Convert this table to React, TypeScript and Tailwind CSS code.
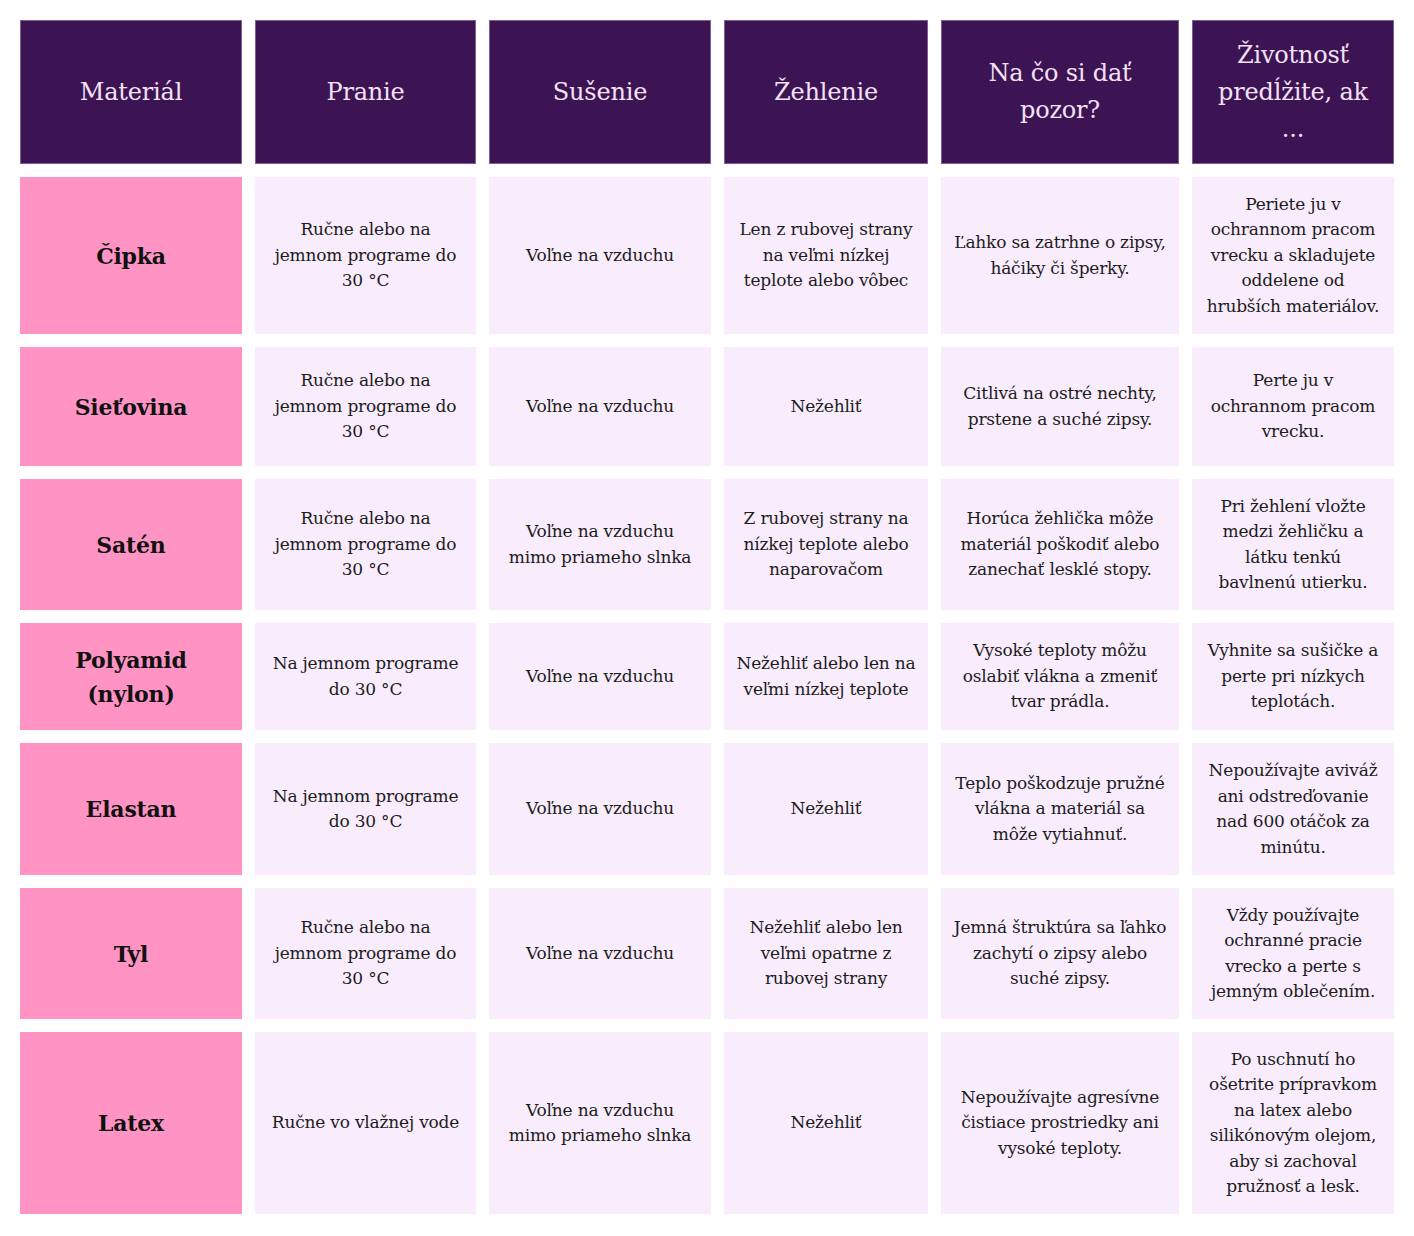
import React from "react";

type Row = { name: string[]; h: number; cells: string[][] };

const headers: string[][] = [
  ["Materiál"],
  ["Pranie"],
  ["Sušenie"],
  ["Žehlenie"],
  ["Na čo si dať", "pozor?"],
  ["Životnosť", "predĺžite, ak", "..."],
];

const rows: Row[] = [
  {
    name: ["Čipka"],
    h: 157,
    cells: [
      ["Ručne alebo na", "jemnom programe do", "30 °C"],
      ["Voľne na vzduchu"],
      ["Len z rubovej strany", "na veľmi nízkej", "teplote alebo vôbec"],
      ["Ľahko sa zatrhne o zipsy,", "háčiky či šperky."],
      ["Periete ju v", "ochrannom pracom", "vrecku a skladujete", "oddelene od", "hrubších materiálov."],
    ],
  },
  {
    name: ["Sieťovina"],
    h: 119,
    cells: [
      ["Ručne alebo na", "jemnom programe do", "30 °C"],
      ["Voľne na vzduchu"],
      ["Nežehliť"],
      ["Citlivá na ostré nechty,", "prstene a suché zipsy."],
      ["Perte ju v", "ochrannom pracom", "vrecku."],
    ],
  },
  {
    name: ["Satén"],
    h: 131,
    cells: [
      ["Ručne alebo na", "jemnom programe do", "30 °C"],
      ["Voľne na vzduchu", "mimo priameho slnka"],
      ["Z rubovej strany na", "nízkej teplote alebo", "naparovačom"],
      ["Horúca žehlička môže", "materiál poškodiť alebo", "zanechať lesklé stopy."],
      ["Pri žehlení vložte", "medzi žehličku a", "látku tenkú", "bavlnenú utierku."],
    ],
  },
  {
    name: ["Polyamid", "(nylon)"],
    h: 107,
    cells: [
      ["Na jemnom programe", "do 30 °C"],
      ["Voľne na vzduchu"],
      ["Nežehliť alebo len na", "veľmi nízkej teplote"],
      ["Vysoké teploty môžu", "oslabiť vlákna a zmeniť", "tvar prádla."],
      ["Vyhnite sa sušičke a", "perte pri nízkych", "teplotách."],
    ],
  },
  {
    name: ["Elastan"],
    h: 132,
    cells: [
      ["Na jemnom programe", "do 30 °C"],
      ["Voľne na vzduchu"],
      ["Nežehliť"],
      ["Teplo poškodzuje pružné", "vlákna a materiál sa", "môže vytiahnuť."],
      ["Nepoužívajte aviváž", "ani odstreďovanie", "nad 600 otáčok za", "minútu."],
    ],
  },
  {
    name: ["Tyl"],
    h: 131,
    cells: [
      ["Ručne alebo na", "jemnom programe do", "30 °C"],
      ["Voľne na vzduchu"],
      ["Nežehliť alebo len", "veľmi opatrne z", "rubovej strany"],
      ["Jemná štruktúra sa ľahko", "zachytí o zipsy alebo", "suché zipsy."],
      ["Vždy používajte", "ochranné pracie", "vrecko a perte s", "jemným oblečením."],
    ],
  },
  {
    name: ["Latex"],
    h: 182,
    cells: [
      ["Ručne vo vlažnej vode"],
      ["Voľne na vzduchu", "mimo priameho slnka"],
      ["Nežehliť"],
      ["Nepoužívajte agresívne", "čistiace prostriedky ani", "vysoké teploty."],
      ["Po uschnutí ho", "ošetrite prípravkom", "na latex alebo", "silikónovým olejom,", "aby si zachoval", "pružnosť a lesk."],
    ],
  },
];

const font = { fontFamily: '"DejaVu Serif", "Liberation Serif", serif' };

function Lines({ lines }: { lines: string[] }) {
  return (
    <>
      {lines.map((l, i) => (
        <span key={i} className="block whitespace-nowrap">
          {l}
        </span>
      ))}
    </>
  );
}

export default function App() {
  return (
    <div className="w-[1414px] min-h-[1236px] bg-white pt-[20px] pl-[20px] pb-[22px]" style={font}>
      <div className="grid grid-cols-[222px_221px_222px_204px_238px_202px] gap-[13px]">
        {headers.map((h, i) => (
          <div
            key={i}
            className="h-[144px] bg-[#3c1353] border border-[#7d5d92] flex flex-col items-center justify-center text-center text-[24px] leading-[37px] text-[#f3e2f6] tracking-[-0.2px]"
          >
            <Lines lines={h} />
          </div>
        ))}
        {rows.map((r, ri) => (
          <React.Fragment key={ri}>
            <div
              className="bg-[#ff94c4] flex flex-col items-center justify-center text-center text-[22px] leading-[34px] font-bold text-[#111111] tracking-[-0.2px]"
              style={{ height: r.h }}
            >
              <Lines lines={r.name} />
            </div>
            {r.cells.map((c, ci) => (
              <div
                key={ci}
                className="bg-[#f9ecfd] flex flex-col items-center justify-center text-center text-[17px] leading-[25.5px] text-[#1c1c1c] tracking-[-0.2px]"
                style={{ height: r.h }}
              >
                <Lines lines={c} />
              </div>
            ))}
          </React.Fragment>
        ))}
      </div>
    </div>
  );
}
